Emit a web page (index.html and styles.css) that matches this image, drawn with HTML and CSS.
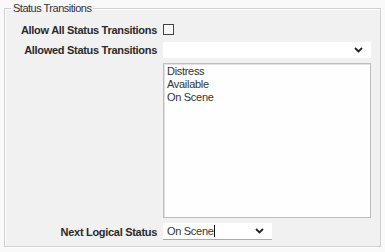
FILE: index.html
```html
<!DOCTYPE html>
<html lang="en">

<head>
  <meta charset="UTF-8">
  <meta name="viewport" content="width=device-width, initial-scale=1.0">
  <title>Status Transitions</title>
  <link rel="stylesheet" href="styles.css">
</head>

<body>
  <fieldset class="group-box">
    <legend>Status Transitions</legend>

    <div class="form-grid">
      <label class="field-label" for="allowAll">Allow All Status Transitions</label>
      <div class="field-row">
        <input type="checkbox" id="allowAll" class="check-box" />
      </div>

      <label class="field-label">Allowed Status Transitions</label>
      <div class="drop-down wide">
        <span class="drop-text"></span>
        <svg class="chevron" width="9" height="6" viewBox="0 0 9 6">
          <polyline points="1,1 4.5,4.5 8,1" fill="none" stroke="#222" stroke-width="1.8" />
        </svg>
      </div>

      <div></div>
      <ul class="list-box">
        <li>Distress</li>
        <li>Available</li>
        <li>On Scene</li>
      </ul>

      <label class="field-label">Next Logical Status</label>
      <div class="drop-down narrow active">
        <span class="drop-text">On Scene<span class="caret"></span></span>
        <svg class="chevron" width="9" height="6" viewBox="0 0 9 6">
          <polyline points="1,1 4.5,4.5 8,1" fill="none" stroke="#222" stroke-width="1.8" />
        </svg>
      </div>
    </div>
  </fieldset>
</body>

</html>
```

FILE: styles.css
```css
/* styles.css */
body {
  font-family: "Liberation Sans", Arial, sans-serif;
  font-size: 11px;
  color: #333;
  background-color: #f9f9f9;
  margin: 0;
  padding: 2px 4px 5px 4px;
}

.group-box {
  margin: 0;
  padding: 7px 0 6px 0;
  background: #f1f1f1;
  border: 1px solid #cfcfcf;
  box-shadow: inset 1px 1px 0 #fff, 1px 1px 0 #fff;
  min-width: 0;
}

.group-box legend {
  margin-left: 6px;
  padding: 0 2px;
  line-height: 13px;
  letter-spacing: -0.5px;
  color: #333;
}

.form-grid {
  display: grid;
  grid-template-columns: 152px 208px;
  column-gap: 6px;
  row-gap: 5px;
  align-items: center;
}

.field-label {
  text-align: right;
  font-weight: bold;
  letter-spacing: -0.3px;
  color: #2b2b2b;
}

.field-row {
  height: 15px;
  display: flex;
  align-items: center;
}

.check-box {
  appearance: none;
  margin: 0;
  width: 11px;
  height: 11px;
  border: 1px solid #444;
  background: #f7f7f7;
}

.drop-down {
  display: flex;
  align-items: center;
  justify-content: space-between;
  background: #fff;
  padding: 0 8px 0 4px;
  box-sizing: border-box;
}

.drop-down.wide {
  height: 16px;
}

.drop-down.narrow {
  width: 109px;
  height: 17px;
}

.drop-down.active {
  border-bottom: 1px solid #f0a030;
}

.drop-text {
  display: flex;
  align-items: center;
  letter-spacing: -0.3px;
}

.caret {
  display: inline-block;
  width: 1px;
  height: 12px;
  background: #111;
}

.list-box {
  list-style: none;
  margin: 0;
  padding: 1px 3px;
  height: 155px;
  box-sizing: border-box;
  background: #fefefe;
  border: 1px solid #bdbdbd;
  box-shadow: inset 1px 1px 0 #e2e2e2;
}

.list-box li {
  line-height: 13px;
  letter-spacing: -0.3px;
}
```
